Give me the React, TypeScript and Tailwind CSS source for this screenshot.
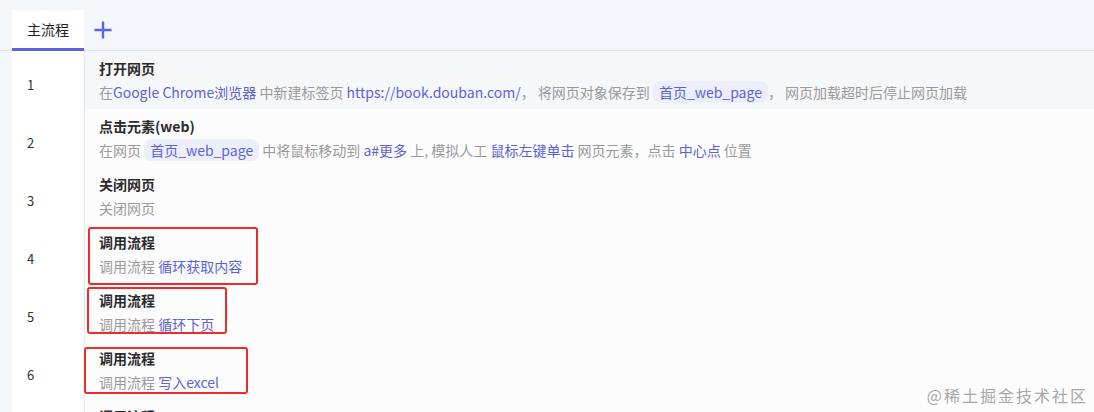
import React from "react";

type Part = { t: string; k?: "grey" | "link" | "pill" };

type Step = {
  title: string;
  desc: Part[];
  active?: boolean;
  mark?: string;
};

const steps: Step[] = [
  {
    title: "打开网页",
    active: true,
    desc: [
      { t: "在" },
      { t: "Google Chrome浏览器", k: "link" },
      { t: " 中新建标签页 " },
      { t: "https://book.douban.com/", k: "link" },
      { t: "， 将网页对象保存到 " },
      { t: "首页_web_page", k: "pill" },
      { t: "， 网页加载超时后停止网页加载" },
    ],
  },
  {
    title: "点击元素(web)",
    desc: [
      { t: "在网页 " },
      { t: "首页_web_page", k: "pill" },
      { t: " 中将鼠标移动到 " },
      { t: "a#更多", k: "link" },
      { t: " 上, 模拟人工 " },
      { t: "鼠标左键单击", k: "link" },
      { t: " 网页元素，点击 " },
      { t: "中心点", k: "link" },
      { t: " 位置" },
    ],
  },
  { title: "关闭网页", desc: [{ t: "关闭网页" }] },
  {
    title: "调用流程",
    desc: [{ t: "调用流程 " }, { t: "循环获取内容", k: "link" }],
    mark: "left-[3px] top-[2px] w-[170px] h-[58px]",
  },
  {
    title: "调用流程",
    desc: [{ t: "调用流程 " }, { t: "循环下页", k: "link" }],
    mark: "left-[2px] top-[4px] w-[140px] h-[47px]",
  },
  {
    title: "调用流程",
    desc: [{ t: "调用流程 " }, { t: "写入excel", k: "link" }],
    mark: "left-[-1px] top-[6px] w-[164px] h-[47px]",
  },
  { title: "调用流程", desc: [{ t: "调用流程 " }, { t: "写入excel", k: "link" }] },
];

const PlusIcon = () => (
  <svg width="18" height="18" viewBox="0 0 18 18" fill="none">
    <path d="M9 0.5v17M0.5 9h17" stroke="#5b64dc" strokeWidth="2.4" />
  </svg>
);

const Desc = ({ parts }: { parts: Part[] }) => (
  <div className="h-[24px] flex items-center whitespace-pre text-[14px] text-[#9a9a9a]">
    {parts.map((p, i) => {
      if (p.k === "link") {
        return (
          <span key={i} className="text-[#5b63d6]">
            {p.t}
          </span>
        );
      }
      if (p.k === "pill") {
        return (
          <span
            key={i}
            className="text-[#5b63d6] bg-[#eceefc] rounded-[7px] px-[6px] leading-[22px]"
          >
            {p.t}
          </span>
        );
      }
      return <span key={i}>{p.t}</span>;
    })}
  </div>
);

const Row = ({ step, index }: { step: Step; index: number }) => (
  <div className="flex h-[58px]">
    <div className="w-[73px] shrink-0 bg-white border-r border-[#e4e6ea] flex items-center pl-[15px] pt-[10px] text-[13px] text-[#333]">
      {index + 1}
    </div>
    <div
      className={
        "relative flex-1 pl-[14px] pt-[5px] " +
        (step.active ? "bg-[#f6f7f9]" : "bg-[#fcfcfd]")
      }
    >
      <div className="h-[24px] flex items-center text-[14px] font-bold text-[#2b2b2b]">
        {step.title}
      </div>
      <Desc parts={step.desc} />
      {step.mark && (
        <div
          className={
            "absolute z-10 border-2 border-[#ee2b2b] rounded-[3px] " + step.mark
          }
        />
      )}
    </div>
  </div>
);

export default function App() {
  return (
    <main
      className="relative w-[1094px] h-[412px] overflow-hidden bg-[#f3f6fb]"
      style={{ fontFamily: '"Noto Sans CJK SC", "Noto Sans", sans-serif' }}
    >
      <header className="h-[51px] flex items-end border-b border-[#dfe2e8] pl-[12px]">
        <div className="w-[72px] h-[41px] bg-white border-b-[3px] border-[#5a63dc] flex items-center justify-center text-[14px] text-[#222] mb-[-1px]">
          主流程
        </div>
        <div className="h-[41px] flex items-center pl-[10px] pt-[1px]">
          <PlusIcon />
        </div>
      </header>
      <section className="pl-[12px]">
        {steps.map((s, i) => (
          <Row key={i} step={s} index={i} />
        ))}
      </section>
      <div className="absolute z-20 right-[6px] bottom-[5px] text-[16px] text-[#a8a8a8] tracking-[2px]">
        @稀土掘金技术社区
      </div>
    </main>
  );
}
